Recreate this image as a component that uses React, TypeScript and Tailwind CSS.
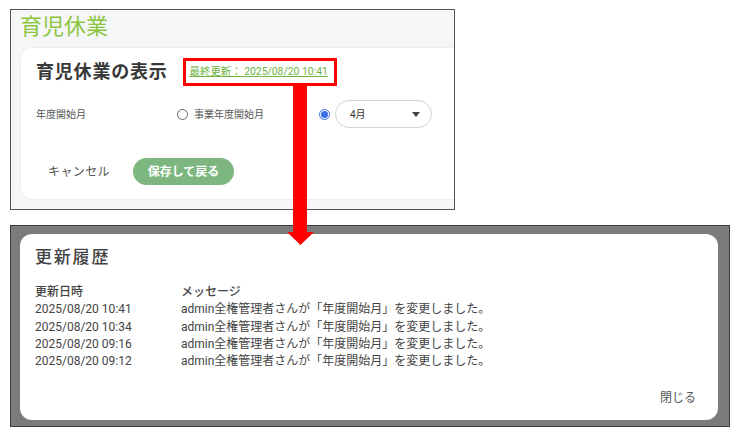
export default function App() {
  const history = [
    '2025/08/20 10:41',
    '2025/08/20 10:34',
    '2025/08/20 09:16',
    '2025/08/20 09:12',
  ]
  const font = { fontFamily: 'Roboto, "Noto Sans CJK JP", sans-serif' }

  return (
    <div className="relative w-[740px] h-[437px] bg-white overflow-hidden" style={font}>
      <div className="flex flex-col pl-[10px] pt-[9px] gap-[15px]">
        {/* Settings screen */}
        <div className="w-[445px] h-[201px] border border-[#555] bg-[#f5f6f8] overflow-hidden pl-[9px] pt-[3px]">
          <h1 className="text-[22px] leading-[28px] text-[#8cc63f] font-normal">育児休業</h1>
          <div className="mt-[6px] w-[460px] h-[153px] bg-white rounded-xl border border-[#eceef1] pl-[15px] pt-[10px]">
            <div className="flex items-center">
              <h2 className="text-[18px] font-bold text-[#383838] tracking-[0.8px] leading-[28px]">育児休業の表示</h2>
              <div className="ml-[15px] border-[3px] border-[#ff0000] h-[28px] w-[154px] flex items-center pl-[4px]">
                <a className="text-[10.4px] text-[#6db33f] underline leading-none whitespace-nowrap">最終更新： 2025/08/20 10:41</a>
              </div>
            </div>
            <div className="flex items-center mt-[14px] h-[28px]">
              <span className="w-[141px] text-[10px] text-[#555]">年度開始月</span>
              <span className="w-[11px] h-[11px] rounded-full border border-[#666]"></span>
              <span className="ml-[6px] w-[125px] text-[10px] text-[#555]">事業年度開始月</span>
              <span className="w-[11px] h-[11px] rounded-full border border-[#3b6fe8] flex items-center justify-center">
                <span className="w-[7px] h-[7px] rounded-full bg-[#3b6fe8]"></span>
              </span>
              <div className="ml-[5px] w-[97px] h-[28px] rounded-full border border-[#cfd3d8] flex items-center justify-between pl-[14px] pr-[11px]">
                <span className="text-[10px] text-[#333]">4月</span>
                <svg width="8" height="5" viewBox="0 0 8 5"><path d="M0 0h8L4 5z" fill="#444" /></svg>
              </div>
            </div>
            <div className="flex items-center mt-[30px]">
              <span className="ml-[12px] text-[12px] text-[#555] tracking-[0.4px]">キャンセル</span>
              <button className="ml-[23px] w-[101px] h-[27px] rounded-full bg-[#7db77f] text-white text-[12px] font-bold">保存して戻る</button>
            </div>
          </div>
        </div>

        {/* History dialog */}
        <div className="w-[720px] h-[202px] border border-[#3d3d3d] bg-[#7b7b7b] pl-[9px] pr-[11px] pt-[8px] pb-[6px]">
          <div className="h-full bg-white rounded-[12px] pl-[15px] pr-[22px] pt-[10px] flex flex-col">
            <h2 className="text-[17px] font-medium text-[#444] tracking-[1.8px] leading-[26px]">更新履歴</h2>
            <div className="mt-[14px] grid grid-cols-[146px_1fr] text-[12px] text-[#444] leading-[17.3px]">
              <span className="font-medium">更新日時</span>
              <span className="font-medium">メッセージ</span>
              {history.map((d) => (
                <>
                  <span key={d}>{d}</span>
                  <span key={d + 'm'}>admin全権管理者さんが「年度開始月」を変更しました。</span>
                </>
              ))}
            </div>
            <div className="mt-auto mb-[13px] self-end text-[12px] text-[#555]">閉じる</div>
          </div>
        </div>
      </div>

      {/* Red arrow */}
      <svg className="absolute left-[287px] top-[85px]" width="27" height="161" viewBox="0 0 27 161">
        <path d="M6 0h14v147h7L13.5 160 0 147h6z" fill="#ff0000" />
      </svg>
    </div>
  )
}
